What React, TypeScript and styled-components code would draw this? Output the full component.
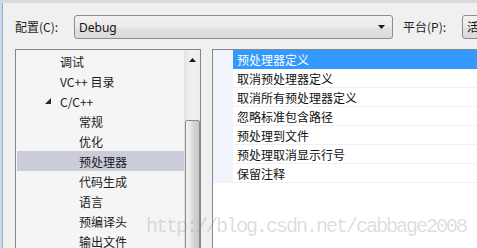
import React from 'react';
import styled, { createGlobalStyle } from 'styled-components';

const Global = createGlobalStyle`
  html, body { margin: 0; padding: 0; background: #f0f0f0; overflow: hidden; }
  body { width: 477px; height: 248px; }
`;

const CJK = `"Microsoft YaHei", "Noto Sans CJK SC", "Noto Sans", sans-serif`;

const Frame = styled.div`
  position: relative;
  width: 477px;
  height: 248px;
  box-sizing: border-box;
  border-top: 3px solid #d9d9d9;
  border-left: 2px solid #c4daf1;
  background: #f0f0f0;
  overflow: hidden;
`;

const Inner = styled.div`
  height: 100%;
  border-left: 1px solid #a3acb6;
  box-sizing: border-box;
  display: flex;
  flex-direction: column;
`;

const TopRow = styled.div`
  display: flex;
  align-items: center;
  padding: 12px 0 0 12px;
  height: 24px;
`;

const Label = styled.div<{ $w: number; $gap?: number }>`
  flex: none;
  width: ${p => p.$w}px;
  margin-left: ${p => p.$gap ?? 0}px;
  font-family: ${CJK};
  font-size: 12px;
  line-height: 16px;
  color: #1e1e1e;
`;

const Combo = styled.div<{ $w: number }>`
  flex: none;
  width: ${p => p.$w}px;
  height: 24px;
  box-sizing: border-box;
  border: 1px solid #8d8d8d;
  border-radius: 3px;
  background: linear-gradient(to bottom, #f2f2f2 0%, #ebebeb 50%, #e1e1e1 55%, #d9d9d9 100%);
  display: flex;
  align-items: center;
  padding: 0 4px;
  font-family: "Segoe UI", "Noto Sans", ${CJK};
  font-size: 12px;
  color: #111;
`;

const ComboText = styled.span`
  flex: 1;
`;

const Arrow = styled.svg`
  flex: none;
  width: 7px;
  height: 4px;
  margin-right: 3px;
`;

const Panels = styled.div`
  display: flex;
  gap: 11px;
  padding: 10px 0 0 12px;
  flex: 1;
  min-height: 0;
`;

const TreeBox = styled.div`
  flex: none;
  width: 186px;
  height: 220px;
  box-sizing: border-box;
  border: 1px solid #828790;
  background: #f5f5f5;
  display: flex;
`;

const TreeList = styled.div`
  flex: 1;
  padding: 1px 0 0 1px;
`;

const TreeRow = styled.div<{ $level: number; $selected?: boolean }>`
  height: 20px;
  display: flex;
  align-items: center;
  position: relative;
  padding-left: ${p => (p.$level === 1 ? 43 : 62)}px;
  background: ${p => (p.$selected ? '#cbccda' : 'transparent')};
  font-family: ${CJK};
  font-size: 12px;
  color: #1a1a1a;
  white-space: nowrap;
`;

const Expander = styled.svg`
  position: absolute;
  left: 28px;
  top: 7px;
  width: 6px;
  height: 6px;
`;

const ScrollBar = styled.div`
  flex: none;
  width: 16px;
  box-sizing: border-box;
  border-left: 1px solid #e2e2e2;
  background: linear-gradient(to right, #e6e6e6, #f0f0f0 40%, #ececec);
  display: flex;
  flex-direction: column;
  align-items: center;
`;

const UpBtn = styled.div`
  height: 17px;
  width: 100%;
  display: flex;
  align-items: center;
  justify-content: center;
  padding-top: 1px;
`;

const Thumb = styled.div`
  margin-top: 52px;
  width: 15px;
  flex: 1;
  box-sizing: border-box;
  border: 1px solid #8b8b8b;
  border-radius: 2px;
  background: linear-gradient(to right, #f3f3f3 0%, #e6e6e6 35%, #d4d4d4 60%, #c6c6c6 100%);
`;

const Grid = styled.div`
  flex: 1;
  height: 220px;
  box-sizing: border-box;
  border-left: 1px solid #828790;
  border-top: 1px solid #828790;
  background: #ffffff;
`;

const GridRow = styled.div`
  display: flex;
  height: 19px;
`;

const Gutter = styled.div`
  flex: none;
  width: 20px;
  background: #f1f5fb;
`;

const Cell = styled.div<{ $selected?: boolean }>`
  flex: 1;
  box-sizing: border-box;
  border-bottom: 1px solid ${p => (p.$selected ? '#3399ff' : '#eef0f5')};
  background: ${p => (p.$selected ? '#3399ff' : '#ffffff')};
  color: ${p => (p.$selected ? '#ffffff' : '#111111')};
  padding-left: 4px;
  display: flex;
  align-items: center;
  font-family: ${CJK};
  font-size: 12px;
  white-space: nowrap;
`;

const Watermark = styled.div`
  position: absolute;
  left: 144px;
  top: 214px;
  font-family: "Liberation Mono", "Courier New", monospace;
  font-size: 20px;
  letter-spacing: -2px;
  line-height: 20px;
  color: rgba(150, 150, 150, 0.32);
  white-space: nowrap;
  pointer-events: none;
`;

const tree = [
  { label: '调试', level: 1 },
  { label: 'VC++ 目录', level: 1 },
  { label: 'C/C++', level: 1, expanded: true },
  { label: '常规', level: 2 },
  { label: '优化', level: 2 },
  { label: '预处理器', level: 2, selected: true },
  { label: '代码生成', level: 2 },
  { label: '语言', level: 2 },
  { label: '预编译头', level: 2 },
  { label: '输出文件', level: 2 },
];

const rows = [
  '预处理器定义',
  '取消预处理器定义',
  '取消所有预处理器定义',
  '忽略标准包含路径',
  '预处理到文件',
  '预处理取消显示行号',
  '保留注释',
];

export default function App() {
  return (
    <>
      <Global />
      <Frame>
        <Inner>
          <TopRow>
            <Label $w={59}>配置(C):</Label>
            <Combo $w={319}>
              <ComboText>Debug</ComboText>
              <Arrow viewBox="0 0 7 4">
                <path d="M0 0 H7 L3.5 4 Z" fill="#1a1a1a" />
              </Arrow>
            </Combo>
            <Label $w={59} $gap={10}>平台(P):</Label>
            <Combo $w={100}>
              <ComboText>活</ComboText>
            </Combo>
          </TopRow>
          <Panels>
            <TreeBox>
              <TreeList>
                {tree.map(t => (
                  <TreeRow key={t.label} $level={t.level} $selected={t.selected}>
                    {t.expanded && (
                      <Expander viewBox="0 0 6 6">
                        <path d="M6 0 V6 H0 Z" fill="#262626" />
                      </Expander>
                    )}
                    {t.label}
                  </TreeRow>
                ))}
              </TreeList>
              <ScrollBar>
                <UpBtn>
                  <svg width="7" height="4" viewBox="0 0 7 4">
                    <path d="M0 4 H7 L3.5 0 Z" fill="#1a1a1a" />
                  </svg>
                </UpBtn>
                <Thumb />
              </ScrollBar>
            </TreeBox>
            <Grid>
              {rows.map((r, i) => (
                <GridRow key={r}>
                  <Gutter />
                  <Cell $selected={i === 0}>{r}</Cell>
                </GridRow>
              ))}
            </Grid>
          </Panels>
        </Inner>
        <Watermark>http://blog.csdn.net/cabbage2008</Watermark>
      </Frame>
    </>
  );
}
